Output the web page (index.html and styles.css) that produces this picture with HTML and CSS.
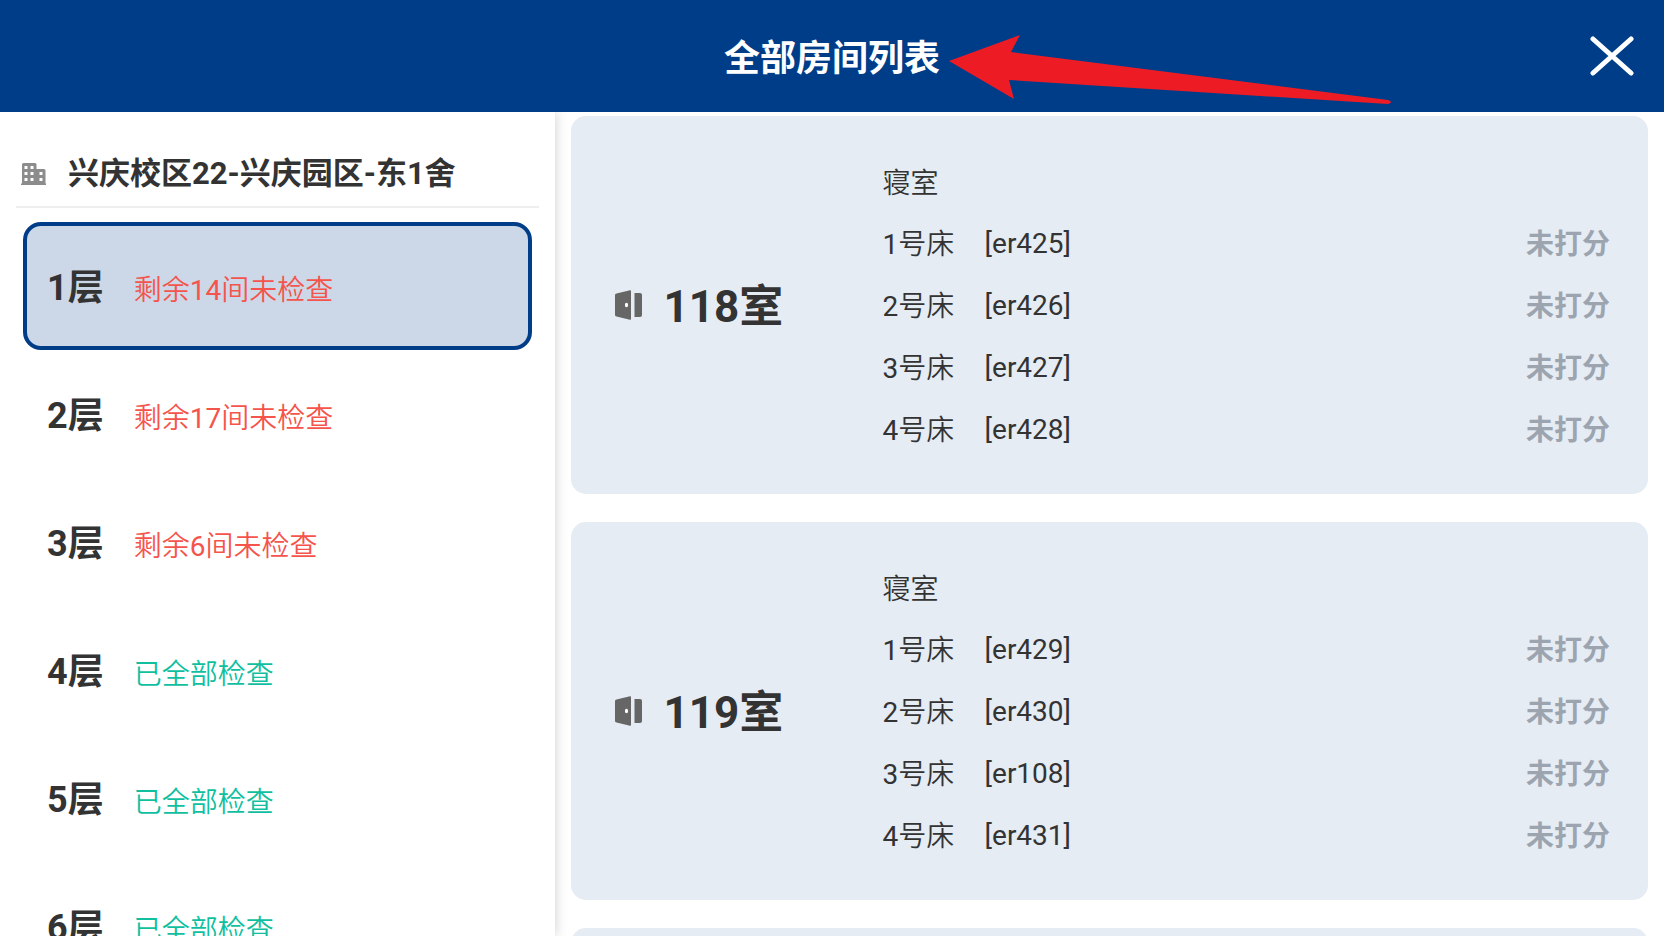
FILE: index.html
```
<!DOCTYPE html>
<html lang="zh-CN">
<head>
    <meta charset="UTF-8">
    <meta name="viewport" content="width=device-width, initial-scale=1.0">
    <title>全部房间列表</title>
    <link rel="stylesheet" href="styles.css">
</head>
<body>
    <!-- 图标 -->
    <svg class="sprite" aria-hidden="true">
        <symbol id="icon-door" viewBox="0 0 27 30">
            <path d="M1.5 3.6 15 .3Q16 .1 16 1.100V28.900Q16 29.900 15 29.700L1.500 26.600Q0 26.300 0 25V5Q0 4 1.500 3.600Z"/>
            <path d="M19.500 3H25q2 0 2 2v20q0 2-2 2h-5.500Z"/>
            <ellipse cx="11.500" cy="15" rx="1.600" ry="2.200" fill="#fff"/>
        </symbol>
    </svg>

    <header class="header">
        <h1>全部房间列表</h1>
        <svg class="arrow" viewBox="0 0 442 66" aria-hidden="true">
            <path d="M0 27 71 1 62 18 439 66q3 1 3 2t-3 2L60 46l5 19Z"/>
        </svg>
        <button class="close" type="button" aria-label="关闭">
            <svg viewBox="0 0 44 40"><path d="M3 3 41 37M41 3 3 37"/></svg>
        </button>
    </header>

    <div class="layout">
        <aside class="sidebar">
            <div class="building">
                <svg viewBox="0 0 25 22" aria-hidden="true">
                    <path fill-rule="evenodd" d="M0 20.500H1V1.500Q1 0 2.500 0H14q1.500 0 1.500 1.500V6H23q1.500 0 1.500 1.500v13H25V22H0ZM3.500 3v3h3V3Zm6 0v3h3V3Zm-6 6v3h3V9Zm6 0v3h3V9Zm-6 6v3h3v-3Zm6 0v3h3v-3Zm9-6v3h3V9Zm0 6v3h3v-3Z"/>
                </svg>
                <h2>兴庆校区22-兴庆园区-东1舍</h2>
            </div>
            <nav class="floors">
                <button class="floor active" type="button" aria-pressed="true"><b>1层</b><span class="todo">剩余<i>14</i>间未检查</span></button>
                <button class="floor" type="button"><b>2层</b><span class="todo">剩余<i>17</i>间未检查</span></button>
                <button class="floor" type="button"><b>3层</b><span class="todo">剩余<i>6</i>间未检查</span></button>
                <button class="floor" type="button"><b>4层</b><span class="done">已全部检查</span></button>
                <button class="floor" type="button"><b>5层</b><span class="done">已全部检查</span></button>
                <button class="floor" type="button"><b>6层</b><span class="done">已全部检查</span></button>
            </nav>
        </aside>

        <main class="rooms">
            <section class="room">
                <h3><svg aria-hidden="true"><use href="#icon-door"/></svg><span>118室</span></h3>
                <table>
                    <tr><th colspan="3">寝室</th></tr>
                    <tr><td class="bed"><i>1</i>号床</td><td>[er425]</td><td class="score">未打分</td></tr>
                    <tr><td class="bed"><i>2</i>号床</td><td>[er426]</td><td class="score">未打分</td></tr>
                    <tr><td class="bed"><i>3</i>号床</td><td>[er427]</td><td class="score">未打分</td></tr>
                    <tr><td class="bed"><i>4</i>号床</td><td>[er428]</td><td class="score">未打分</td></tr>
                </table>
            </section>
            <section class="room">
                <h3><svg aria-hidden="true"><use href="#icon-door"/></svg><span>119室</span></h3>
                <table>
                    <tr><th colspan="3">寝室</th></tr>
                    <tr><td class="bed"><i>1</i>号床</td><td>[er429]</td><td class="score">未打分</td></tr>
                    <tr><td class="bed"><i>2</i>号床</td><td>[er430]</td><td class="score">未打分</td></tr>
                    <tr><td class="bed"><i>3</i>号床</td><td>[er108]</td><td class="score">未打分</td></tr>
                    <tr><td class="bed"><i>4</i>号床</td><td>[er431]</td><td class="score">未打分</td></tr>
                </table>
            </section>
            <section class="room"></section>
        </main>
    </div>
</body>
</html>
```
FILE: styles.css
```
* {
    box-sizing: border-box;
}
body {
    font-family: Roboto, "Noto Sans CJK SC", sans-serif;
    font-size: 28px;
    color: #333;
    background: #fff;
    margin: 0;
    height: 100vh;
    display: flex;
    flex-direction: column;
    overflow: hidden;
}
h1, h2, h3 {
    margin: 0;
}
/* digits are a bit heavier than the text around them */
i {
    font-style: normal;
    font-weight: 400;
}
button {
    font: inherit;
    color: inherit;
    background: none;
    border: none;
    padding: 0;
    cursor: pointer;
}
.sprite {
    display: none;
}

/* header */
.header {
    position: relative;
    flex: none;
    display: grid;
    grid-template-columns: 1fr auto 1fr;
    align-items: center;
    height: 112px;
    padding: 0 30px;
    background: #003d89;
    color: #fff;
}
.header h1 {
    grid-column: 2;
    padding-top: 6px;
    font-size: 36px;
    line-height: 48px;
    font-weight: 700;
}
.close {
    justify-self: end;
    display: flex;
}
.close svg {
    width: 44px;
    height: 40px;
    fill: none;
    stroke: #fff;
    stroke-width: 5;
    stroke-linecap: round;
}
.arrow {
    position: absolute;
    left: calc(50% + 117px);
    top: 34px;
    width: 442px;
    height: 66px;
    overflow: visible;
    fill: #ed1c24;
}

.layout {
    flex: 1;
    display: flex;
    min-height: 0;
}

/* floors */
.sidebar {
    flex: none;
    width: 33.33%;
    padding: 30px 16px 0;
    box-shadow: 0 0 12px rgba(0, 0, 0, 0.2);
    overflow: hidden;
}
.building {
    display: flex;
    align-items: center;
    gap: 22px;
    height: 66px;
    padding-left: 5px;
    border-bottom: 2px solid #eee;
}
.building svg {
    width: 25px;
    height: 22px;
    fill: #8c8c8c;
}
.building h2 {
    font-size: 31px;
    line-height: 40px;
    font-weight: 700;
}
.floors {
    padding: 14px 7px 0;
}
.floor {
    display: flex;
    align-items: center;
    gap: 30px;
    width: 100%;
    height: 128px;
    padding-left: 20px;
    border: 4px solid transparent;
    border-radius: 18px;
}
.floor b {
    padding-bottom: 4px;
    font-size: 36px;
    font-weight: 700;
}
.floor span {
    font-weight: 350;
    padding-top: 4px;
}
.floor.active {
    background: #ccd8e7;
    border-color: #003d89;
}
.todo {
    color: #f5544c;
}
.done {
    color: #10bfa0;
}

/* rooms */
.rooms {
    flex: 1;
    display: flex;
    flex-direction: column;
    gap: 28px;
    padding: 4px 16px 0;
    overflow: hidden;
}
.room {
    flex: none;
    display: grid;
    grid-template-columns: 268px 1fr;
    align-items: center;
    min-height: 378px;
    padding: 0 38px 0 44px;
    background: #e6ecf4;
    border-radius: 15px;
}
.room h3 {
    display: flex;
    align-items: center;
    gap: 22px;
    font-size: 44px;
    font-weight: 700;
}
.room h3 span {
    padding-bottom: 4px;
}
.room h3 svg {
    width: 27px;
    height: 30px;
    fill: #666;
}
.room table {
    width: 100%;
    border-collapse: collapse;
}
.room tr {
    height: 62px;
}
.room th,
.room td {
    padding: 0;
    text-align: left;
    font-weight: 400;
}
.room th,
.room .bed {
    font-weight: 350;
}
.room .bed {
    width: 102px;
    padding-bottom: 2px;
}
.room .score {
    padding-bottom: 2px;
    text-align: right;
    font-weight: 700;
    color: #9ca5af;
}
```
